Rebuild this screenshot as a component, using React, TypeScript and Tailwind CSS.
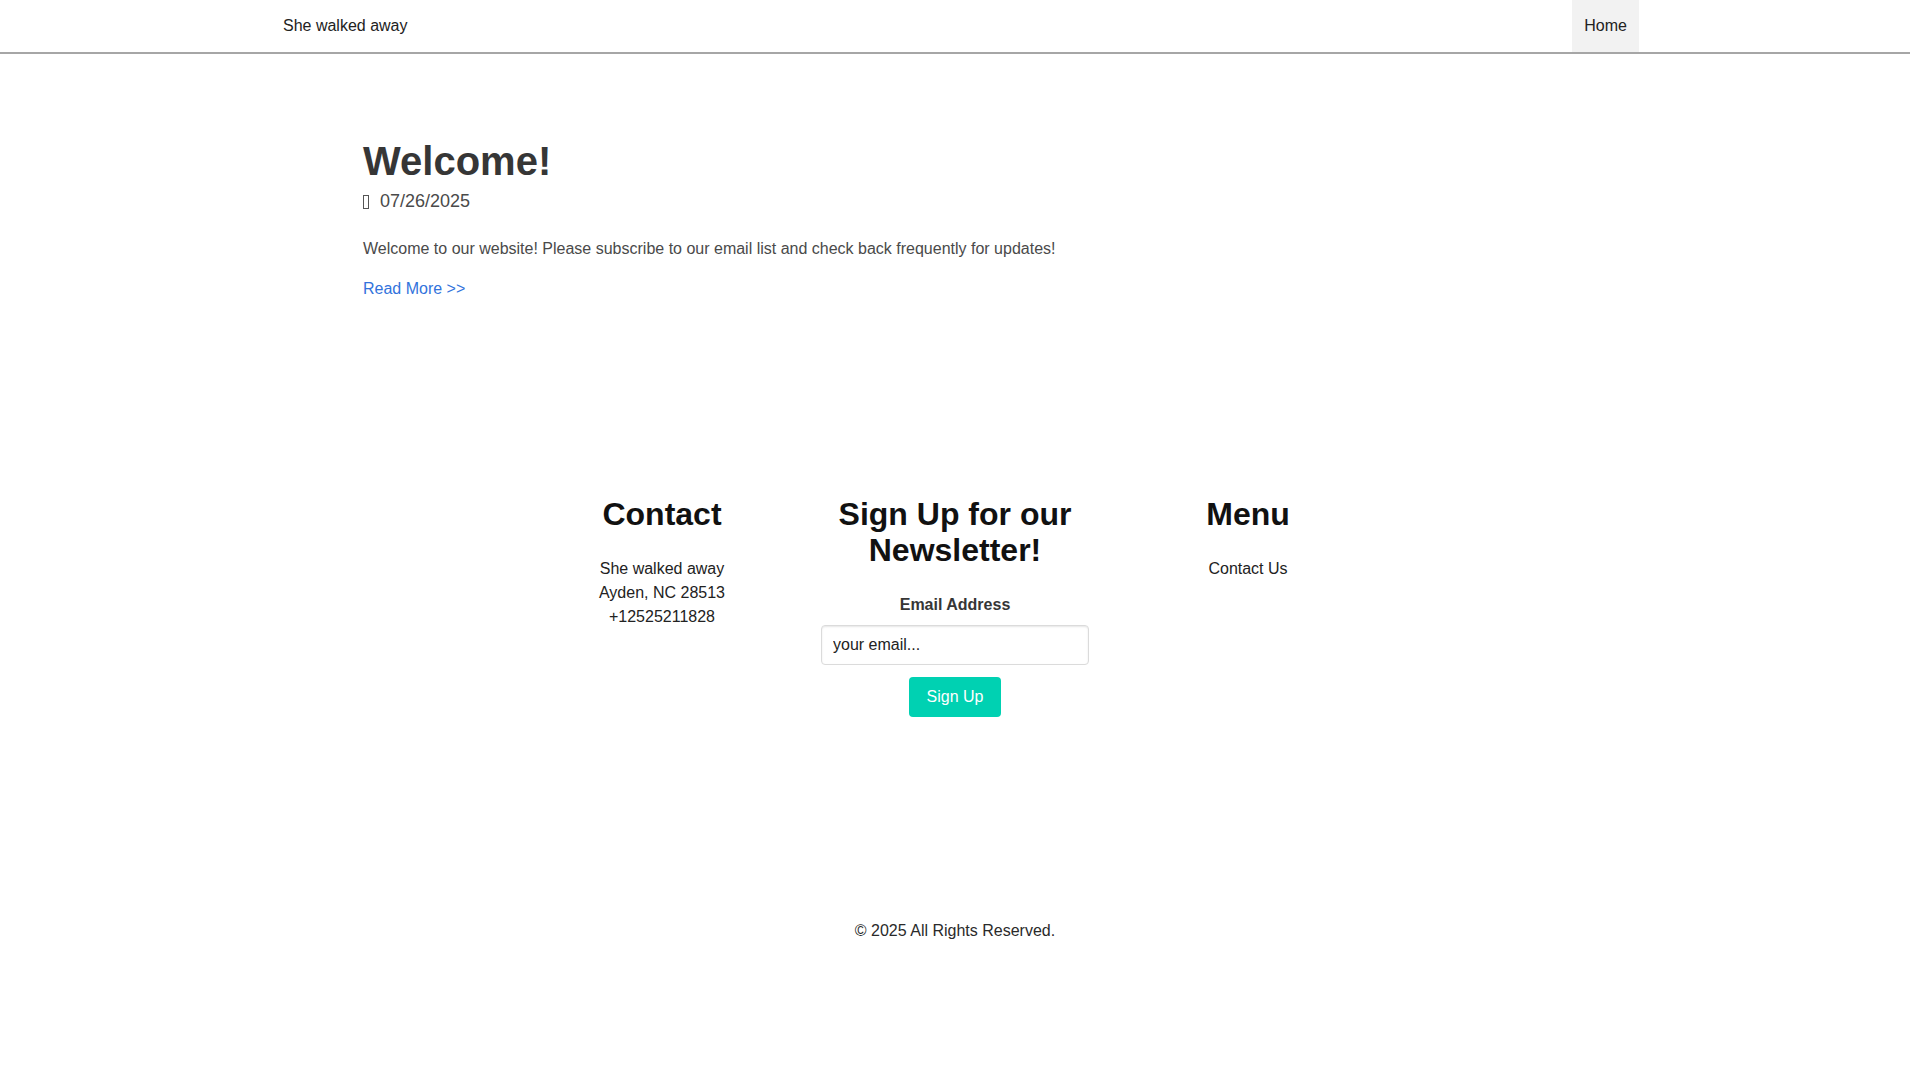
const Navbar = () => {
	return (
		<nav className="h-[54px] border-b-2 border-[#a6a6a6] bg-white">
			<div className="w-[1344px] h-[52px] mx-auto flex items-stretch justify-between">
				<a className="-ml-3 px-3 flex items-center text-base text-[#222]">
					She walked away
				</a>
				<a className="-mr-3 px-3 flex items-center text-base text-[#222] bg-[#f2f2f2]">
					Home
				</a>
			</div>
		</nav>
	);
};

const Post = () => {
	return (
		<section className="pt-[85px]">
			<div className="w-[1184px] mx-auto">
				<h1 className="text-[40px] leading-[45px] font-bold text-[#363636]">
					Welcome!
				</h1>
				<div className="mt-[4px] flex items-center text-[18px] leading-[27px] text-[#4a4a4a]">
					{/* icon font glyph that failed to load */}
					<span className="inline-block w-[6px] h-[14px] border border-[#555] mr-[11px]" />
					<span>07/26/2025</span>
				</div>
				<p className="mt-[22px] text-base leading-6 text-[#4a4a4a]">
					Welcome to our website! Please subscribe to our email list and check
					back frequently for updates!
				</p>
				<a className="block mt-4 text-base leading-6 text-[#3273dc]">
					Read More &gt;&gt;
				</a>
			</div>
		</section>
	);
};

const Footer = () => {
	return (
		<footer className="pt-[195px] pb-[96px]">
			<div className="flex justify-center">
				<div className="w-[293px] px-3 text-center">
					<h2 className="text-[32px] leading-[36px] font-bold text-[#111]">
						Contact
					</h2>
					<div className="mt-[25px] text-base leading-6 text-[#222]">
						<p>She walked away</p>
						<p>Ayden, NC 28513</p>
						<p>+12525211828</p>
					</div>
				</div>
				<div className="w-[293px] px-3 text-center">
					<h2 className="text-[32px] leading-[36px] font-bold text-[#111]">
						Sign Up for our Newsletter!
					</h2>
					<label className="block mt-[25px] text-base leading-6 font-bold text-[#363636]">
						Email Address
					</label>
					<input
						type="email"
						defaultValue=""
						placeholder="your email..."
						className="mt-[8px] block w-[268px] h-10 mx-auto px-[11px] rounded border border-[#dbdbdb] shadow-[inset_0_1px_2px_rgba(10,10,10,0.1)] text-base text-[#222] placeholder:text-[#222] outline-none"
					/>
					<button className="mt-3 h-10 w-[92px] rounded bg-[#00d1b2] text-white text-base">
						Sign Up
					</button>
				</div>
				<div className="w-[293px] px-3 text-center">
					<h2 className="text-[32px] leading-[36px] font-bold text-[#111]">
						Menu
					</h2>
					<div className="mt-[25px] text-base leading-6 text-[#222]">
						<a>Contact Us</a>
					</div>
				</div>
			</div>
			<p className="mt-[202px] text-center text-base leading-6 text-[#2a2a2a]">
				© 2025 All Rights Reserved.
			</p>
		</footer>
	);
};

export default function App() {
	return (
		<div className="w-[1910px] min-h-[1080px] bg-white font-['Liberation_Sans',Arial,sans-serif]">
			<Navbar />
			<Post />
			<Footer />
		</div>
	);
}
